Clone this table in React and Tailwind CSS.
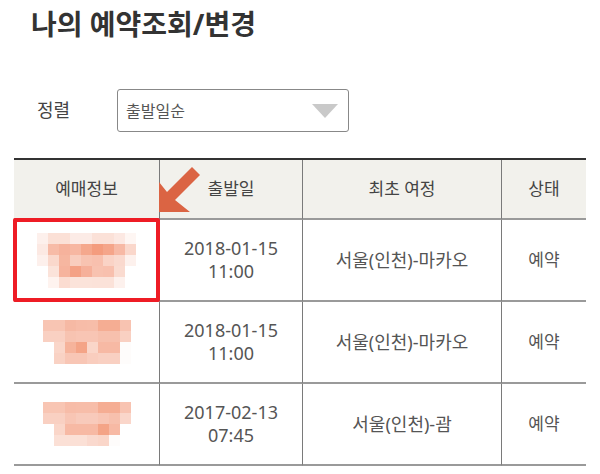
import React from 'react';

const font = { fontFamily: '"Noto Sans", "Noto Sans CJK KR", sans-serif' };

// 모자이크 처리된 예매정보 썸네일 (11px 블록)
const blur1 = [
  ['bg-[#fdf0ec]', 'bg-[#fbe0d6]', 'bg-[#fbe0d6]', 'bg-[#fcebe6]', 'bg-[#fcebe6]', 'bg-[#fbe1d8]', 'bg-[#fbe1d8]', 'bg-[#fce8e2]', 'bg-[#fef6f3]'],
  ['bg-[#fce9e3]', 'bg-[#f7bba7]', 'bg-[#f6b29c]', 'bg-[#f7b7a2]', 'bg-[#f5a88d]', 'bg-[#f49c7e]', 'bg-[#f5a58a]', 'bg-[#f7b9a5]', 'bg-[#fad7cb]'],
  ['bg-[#fdf0ec]', 'bg-[#fad8cc]', 'bg-[#f6b6a0]', 'bg-[#f9cdbe]', 'bg-[#f8c3b1]', 'bg-[#f8c0ae]', 'bg-[#fad3c6]', 'bg-[#fad9ce]', 'bg-[#fdf1ed]'],
  ['bg-white', 'bg-[#fbe3da]', 'bg-[#f6b39d]', 'bg-[#f4a185]', 'bg-[#f6b09a]', 'bg-[#f8c2b0]', 'bg-[#f8c0ae]', 'bg-[#fadbd0]', 'bg-white'],
  ['bg-white', 'bg-[#fef3ef]', 'bg-[#fbdcd1]', 'bg-[#fbe3da]', 'bg-[#fbe3da]', 'bg-[#fbe2d9]', 'bg-[#fbe2d9]', 'bg-[#fdf1ed]', 'bg-white'],
];

const blur2 = [
  ['bg-[#f8c5b3]', 'bg-[#f8c5b3]', 'bg-[#f6b9a4]', 'bg-[#f7bca8]', 'bg-[#f7bda9]', 'bg-[#f5ad93]', 'bg-[#f5ad93]', 'bg-[#f8c3b1]'],
  ['bg-[#f9d0c2]', 'bg-[#f9d0c2]', 'bg-[#f7c3b1]', 'bg-[#f8c5b4]', 'bg-[#f8c5b4]', 'bg-[#f7c0ad]', 'bg-[#f7c0ad]', 'bg-[#f9d0c2]'],
  ['bg-white', 'bg-[#fad6c9]', 'bg-[#f6b39b]', 'bg-[#f4a487]', 'bg-[#fad6c9]', 'bg-[#f7b9a4]', 'bg-[#f7b9a4]', 'bg-[#fefcfb]'],
  ['bg-white', 'bg-[#f9d2c4]', 'bg-[#f8c6b5]', 'bg-[#f8c6b5]', 'bg-[#f9cdbe]', 'bg-[#f9d0c2]', 'bg-[#f9d0c2]', 'bg-[#fefcfb]'],
];

const blur3 = [
  ['bg-[#f8c5b3]', 'bg-[#f8c5b3]', 'bg-[#f7bca8]', 'bg-[#f7bda9]', 'bg-[#f7bda9]', 'bg-[#f5ad93]', 'bg-[#f5ad93]', 'bg-[#f8c3b1]'],
  ['bg-[#f9d0c2]', 'bg-[#f9d0c2]', 'bg-[#f8c5b4]', 'bg-[#f8cabb]', 'bg-[#f8cabb]', 'bg-[#f8c5b4]', 'bg-[#f7c0ad]', 'bg-[#fad6ca]'],
  ['bg-white', 'bg-[#fad6c9]', 'bg-[#f7b9a4]', 'bg-[#f7b9a4]', 'bg-[#f7b9a4]', 'bg-[#f4a487]', 'bg-[#f7b9a4]', 'bg-white'],
  ['bg-white', 'bg-[#fbe0d6]', 'bg-[#fbe0d6]', 'bg-[#fbe0d6]', 'bg-[#fad9ce]', 'bg-[#fad6c9]', 'bg-[#fefcfb]', 'bg-white'],
];

const rows = [
  { blur: blur1, date: '2018-01-15', time: '11:00', route: '서울(인천)-마카오', status: '예약' },
  { blur: blur2, date: '2018-01-15', time: '11:00', route: '서울(인천)-마카오', status: '예약' },
  { blur: blur3, date: '2017-02-13', time: '07:45', route: '서울(인천)-괌', status: '예약' },
];

function Mosaic({ grid }) {
  return (
    <div className="flex flex-col">
      {grid.map((line, i) => (
        <div key={i} className="flex">
          {line.map((c, j) => (
            <div key={j} className={`w-[11px] h-[11px] ${c}`} />
          ))}
        </div>
      ))}
    </div>
  );
}

const cell = 'flex items-center justify-center border-b-2 border-[#9a9a9a]';
const divider = 'border-r border-r-[#7a7a7a]';

export default function App() {
  return (
    <div className="relative w-[600px] h-[474px] bg-white overflow-hidden" style={font}>
      {/* 제목 */}
      <h1 className="pl-[31px] pt-[8px] text-[28px] leading-[32px] font-bold text-[#333]">
        나의 예약조회/변경
      </h1>

      {/* 정렬 */}
      <div className="flex items-center mt-[49px] pl-[37px]">
        <span className="w-[80px] text-[18px] text-[#444]">정렬</span>
        <div className="flex items-center justify-between w-[232px] h-[43px] border border-[#888] rounded-[3px] pl-[8px] pr-[10px]">
          <span className="text-[16px] text-[#555]">출발일순</span>
          <svg width="26" height="14" viewBox="0 0 26 14">
            <polygon points="0,0 26,0 13,14" fill="#c9c9c9" />
          </svg>
        </div>
      </div>

      {/* 예약 목록 */}
      <div className="ml-[14px] mt-[26px] w-[572px] border-t-2 border-[#333] grid grid-cols-[146px_143px_199px_84px] text-[#444]">
        <div className={`${cell} ${divider} h-[60px] bg-[#f2f1ec] text-[17px]`}>예매정보</div>
        <div className={`${cell} ${divider} h-[60px] bg-[#f2f1ec] text-[17px]`}>출발일</div>
        <div className={`${cell} ${divider} h-[60px] bg-[#f2f1ec] text-[17px]`}>최초 여정</div>
        <div className={`${cell} h-[60px] bg-[#f2f1ec] text-[17px]`}>상태</div>

        {rows.map((r, i) => (
          <React.Fragment key={i}>
            <div className={`${cell} ${divider} h-[82px]`}>
              <Mosaic grid={r.blur} />
            </div>
            <div className={`${cell} ${divider} h-[82px] flex-col text-[18px] leading-[23px] text-[#555]`}>
              <span>{r.date}</span>
              <span>{r.time}</span>
            </div>
            <div className={`${cell} ${divider} h-[82px] text-[18px] text-[#555]`}>{r.route}</div>
            <div className={`${cell} h-[82px] text-[17px] text-[#555]`}>{r.status}</div>
          </React.Fragment>
        ))}
      </div>

      {/* 강조 표시 */}
      <div className="absolute left-[13px] top-[218px] w-[147px] h-[84px] border-[4px] border-[#ee1c25] rounded-[2px]" />
      <svg className="absolute left-[150px] top-[160px]" width="60" height="60" viewBox="0 0 60 60">
        <polygon points="9,52 9,22 17,32 42,7 50,15 25,40 40,52" fill="#db6443" />
      </svg>
    </div>
  );
}
